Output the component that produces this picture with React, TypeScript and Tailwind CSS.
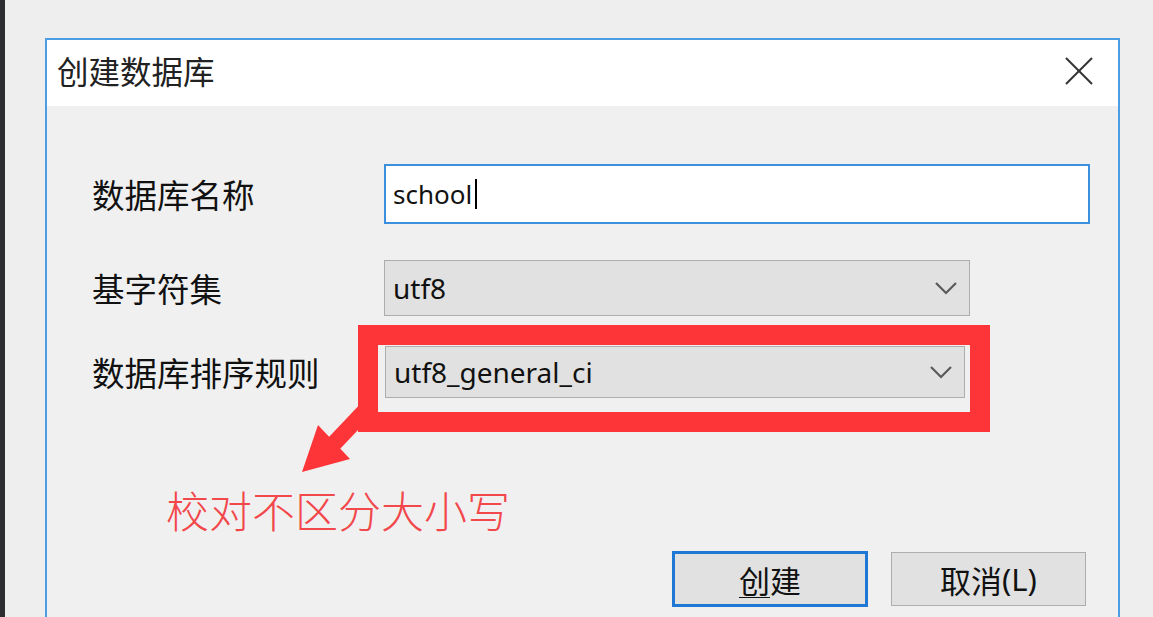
import React from "react";

const cjk = { fontFamily: '"Noto Sans CJK SC", "Noto Sans", sans-serif' };
const latin = { fontFamily: '"Noto Sans", "Noto Sans CJK SC", sans-serif' };

const Chevron = () => (
    <svg width="24" height="14" viewBox="0 0 24 14" fill="none">
        <polyline points="2,2 12,12 22,2" stroke="#5a5a5a" strokeWidth="2.2"/>
    </svg>
);

const Select = ({value, className}: { value: string, className: string }) => (
    <div className={`flex h-full items-center justify-between border border-[#adadad] bg-[#e1e1e1] pl-[8px] pr-[11px] ${className}`}>
        <span className="text-[28px] leading-none text-[#111]" style={latin}>{value}</span>
        <Chevron/>
    </div>
);

export default function App() {
    return (
        <div className="relative flex h-[617px] w-[1153px] overflow-hidden bg-[#eeeeee]" style={cjk}>
            <div className="h-full w-[5px] shrink-0 bg-[#2c2e32]"/>

            <div className="ml-[40px] mt-[38px] flex h-[620px] w-[1075px] shrink-0 flex-col border-2 border-b-0 border-[#4c9de3] bg-[#f0f0f0]">
                <div className="flex h-[66px] items-center justify-between bg-white pb-[4px] pl-[10px] pr-[25px]">
                    <span className="text-[31.5px] leading-none text-[#222]">创建数据库</span>
                    <svg width="28" height="28" viewBox="0 0 28 28">
                        <line x1="1" y1="1" x2="27" y2="27" stroke="#333" strokeWidth="2"/>
                        <line x1="27" y1="1" x2="1" y2="27" stroke="#333" strokeWidth="2"/>
                    </svg>
                </div>

                <div className="flex flex-col pl-[45px] pt-[58px] text-[#111]">
                    <div className="flex h-[60px] items-center">
                        <span className="w-[292px] text-[32.5px] leading-none">数据库名称</span>
                        <div className="flex h-full w-[706px] items-center border-2 border-[#3b8fdc] bg-white pl-[7px]">
                            <span className="text-[26px] leading-none" style={latin}>school</span>
                            <span className="ml-[3px] h-[30px] w-[2px] bg-black"/>
                        </div>
                    </div>

                    <div className="mt-[36px] flex h-[56px] items-center">
                        <span className="w-[292px] text-[32.5px] leading-none">基字符集</span>
                        <Select value="utf8" className="w-[586px]"/>
                    </div>

                    <div className="mt-[30px] flex h-[52px] items-center">
                        <span className="w-[292px] text-[32.5px] leading-none">数据库排序规则</span>
                        <Select value="utf8_general_ci" className="ml-[1px] w-[580px]"/>
                    </div>

                    <div className="ml-[580px] mt-[153px] flex items-start gap-[23px]">
                        <button className="flex h-[56px] w-[196px] items-center justify-center border-[3px] border-[#1f78d4] bg-[#e1e1e1] text-[31px] leading-none text-[#111]">
                            <span className="underline decoration-1 underline-offset-4">创</span>建
                        </button>
                        <button className="mt-[1px] flex h-[54px] w-[195px] items-center justify-center border border-[#adadad] bg-[#e1e1e1] text-[31px] leading-none text-[#111]">
                            取消<span style={latin}>(L)</span>
                        </button>
                    </div>
                </div>
            </div>

            {/* annotation overlay */}
            <svg className="pointer-events-none absolute left-0 top-0" width="1153" height="617">
                <rect x="368" y="335" width="612" height="87" fill="none" stroke="#fd3539" strokeWidth="20"/>
                <polygon points="364,400 376,411 340,449 328,438" fill="#fd3539"/>
                <polygon points="302,472 318,425 350,459" fill="#fd3539"/>
            </svg>
            <span className="absolute left-[166px] top-[488px] text-[43px] font-light leading-none text-[#f2474b]">
                校对不区分大小写
            </span>
        </div>
    );
}
